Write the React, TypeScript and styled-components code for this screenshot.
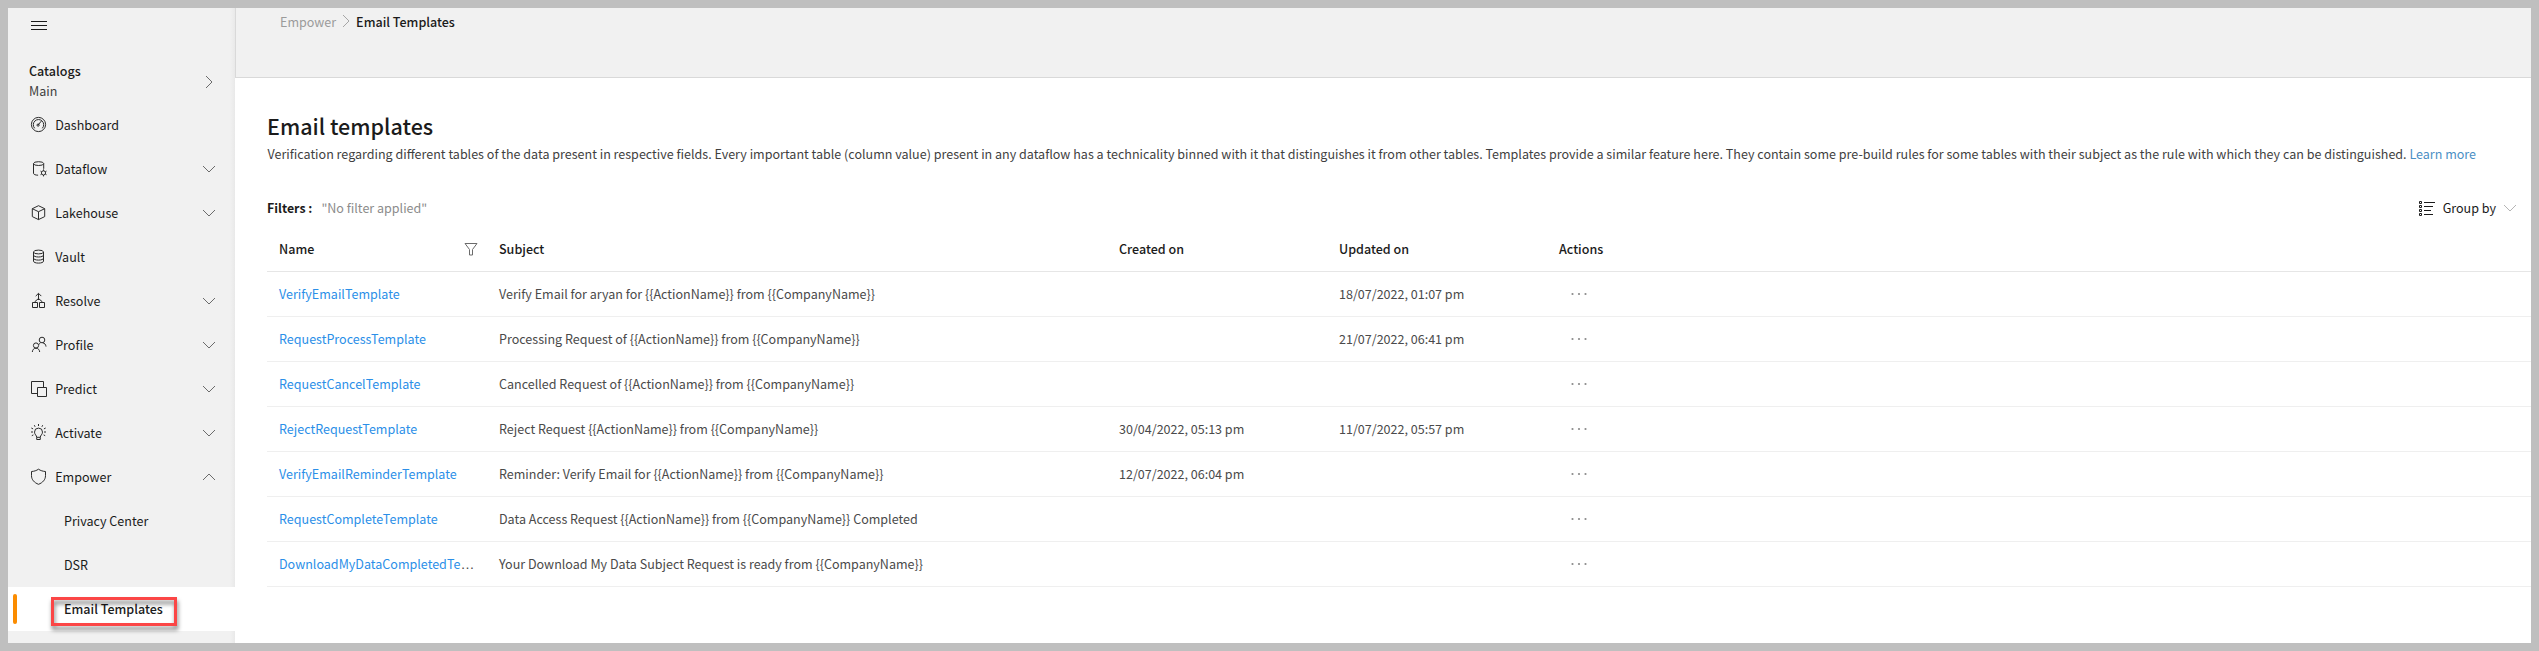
import React from 'react';
import styled, { createGlobalStyle, css } from 'styled-components';

const GlobalStyle = createGlobalStyle`
  * { box-sizing: border-box; }
  body {
    margin: 0;
    background: #bfbfbf;
    color: #1b1b1b;
    font-family: 'Noto Sans CJK SC', 'Noto Sans', sans-serif;
    font-size: 12.54px;
    line-height: 20px;
  }
`;

const Frame = styled.div`
  display: flex;
  height: 100vh;
  border: 8px solid #bfbfbf;
  background: #fff;
  overflow: hidden;
`;

const Sidebar = styled.nav`
  flex: none;
  display: flex;
  flex-direction: column;
  width: 227px;
  background: linear-gradient(to right, #f1f1f1 calc(100% - 5px), #e9e9e9);
`;

const MenuToggle = styled.div`
  height: 53px;
  padding: 9px 0 0 22px;
`;

const Catalog = styled.div`
  display: flex;
  align-items: center;
  justify-content: space-between;
  height: 42px;
  padding: 0 22px 2px 21px;
`;

const CatalogTitle = styled.div`
  font-weight: 500;
`;

const CatalogName = styled.div`
  color: #3f3f3f;
`;

const CatalogArrow = styled.span`
  display: flex;
  margin-top: 2px;
`;

const NavItem = styled.a`
  flex: none;
  display: flex;
  align-items: center;
  height: 44px;
  padding: 0 19px 0 22px;
`;

const NavLabel = styled.span`
  flex: 1;
  margin-left: 7.2px;
`;

const SubItem = styled.a<{ $active?: boolean }>`
  flex: none;
  display: flex;
  align-items: center;
  height: 44px;
  padding-left: 5px;
  ${(p) => p.$active && css`
    background: #fff;
    font-weight: 500;
  `}
`;

const ActiveBar = styled.span<{ $visible?: boolean }>`
  width: 4px;
  height: 30px;
  border-radius: 2px;
  background: ${(p) => (p.$visible ? '#fb8c00' : 'transparent')};
`;

const SubLabel = styled.span`
  position: relative;
  margin-left: 47px;
`;

const Highlight = styled.span`
  position: absolute;
  left: -13px;
  top: -2px;
  width: 126px;
  height: 29px;
  border: 3px solid #fb4646;
  filter: drop-shadow(1px 4px 2px rgba(0, 0, 0, 0.5));
`;

const Main = styled.main`
  flex: 1;
  min-width: 0;
  display: flex;
  flex-direction: column;
`;

const Header = styled.header`
  flex: none;
  display: flex;
  align-items: flex-start;
  height: 70px;
  padding: 4px 0 0 44px;
  border-left: 1px solid #d9d9d9;
  border-bottom: 1px solid #d9d9d9;
  background: #f1f1f1;
`;

const Crumb = styled.span<{ $current?: boolean }>`
  color: ${(p) => (p.$current ? '#1b1b1b' : '#9b9b9b')};
  font-weight: ${(p) => (p.$current ? 500 : 400)};
`;

const CrumbSeparator = styled.span`
  display: flex;
  margin: 2px 6px 0 6px;
`;

const Content = styled.section`
  padding: 32px 0 0 32px;
`;

const Title = styled.h1`
  margin: 0 0 2px;
  font-size: 21.5px;
  font-weight: 500;
  line-height: 32px;
`;

const Description = styled.p`
  margin: 0;
  padding-left: 0.5px;
  color: #3f3f3f;
  white-space: nowrap;
`;

const LearnMore = styled.a`
  color: #4b8fc4;
`;

const Toolbar = styled.div`
  display: flex;
  align-items: center;
  justify-content: space-between;
  height: 63px;
  padding: 25px 14px 0 0;
`;

const FilterLabel = styled.span`
  margin-right: 9px;
  font-size: 12.4px;
  font-weight: 700;
`;

const FilterValue = styled.span`
  color: #8c8c8c;
`;

const GroupBy = styled.div`
  display: flex;
  align-items: center;
  gap: 7px;
`;

const Row = styled.div<{ $head?: boolean }>`
  display: grid;
  grid-template-columns: 220px 620px 220px 220px 1fr;
  align-items: center;
  height: 45px;
  border-bottom: 1px solid ${(p) => (p.$head ? '#e6e6e6' : '#efefef')};
  color: ${(p) => (p.$head ? '#1b1b1b' : '#4a4a4a')};
  font-weight: ${(p) => (p.$head ? 500 : 400)};
`;

const Cell = styled.div`
  display: flex;
  align-items: center;
  justify-content: space-between;
  padding: 0 9px 0 12px;
  white-space: nowrap;
`;

const NameLink = styled.a`
  color: #2b8fe8;
`;

const Ellipsis = styled.span`
  color: #4a4a4a;
  font-family: 'Liberation Sans', sans-serif;
  font-size: 14px;
  line-height: 14px;
`;

const MoreIcon = styled.svg`
  margin-left: 11px;
`;

type Dir = 'right' | 'down' | 'up';

const chevrons: Record<Dir, { w: number; h: number; d: string }> = {
  right: { w: 8, h: 14, d: 'M1 1l6 6-6 6' },
  down: { w: 14, h: 8, d: 'M1 1l6 6 6-6' },
  up: { w: 14, h: 8, d: 'M1 7l6-6 6 6' },
};

function Chevron({ dir, color = '#6b6b6b' }: { dir: Dir; color?: string }) {
  const c = chevrons[dir];
  return (
    <svg width={c.w} height={c.h} fill="none" stroke={color}>
      <path d={c.d} />
    </svg>
  );
}

const icons: Record<string, React.ReactNode> = {
  Dashboard: (
    <>
      <circle cx="8.5" cy="8.5" r="7.1" />
      <path d="M4.7 12.3a5.2 5.2 0 1 1 7.6 0M8 9.1l3.3-4" />
      <circle cx="8.1" cy="9.1" r="1.1" />
    </>
  ),
  Dataflow: (
    <>
      <ellipse cx="8.6" cy="3.6" rx="5.1" ry="1.9" />
      <path d="M3.5 3.6v9.7c0 1.1 1.9 1.9 4.6 1.9M13.7 3.6v5.2" />
      <circle cx="13.5" cy="12.9" r="2.1" />
      <path d="M13.5 9.4v1.4M13.5 15v1.4M10.5 11.1l1.2.7M15.3 14l1.2.7M10.5 14.7l1.2-.7M15.3 11.8l1.2-.7" />
    </>
  ),
  Lakehouse: <path d="M8.5 1.7l6.2 3v7.9l-6.2 3-6.2-3V4.7zM2.3 4.7l6.2 3 6.2-3M8.5 7.7v7.9" />,
  Vault: (
    <>
      <ellipse cx="8.5" cy="4" rx="5" ry="1.9" />
      <path d="M3.5 4v9.2c0 1.1 2.2 1.9 5 1.9s5-.8 5-1.9V4M3.5 7.1c0 1.1 2.2 1.9 5 1.9s5-.8 5-1.9M3.5 10.2c0 1.1 2.2 1.9 5 1.9s5-.8 5-1.9" />
    </>
  ),
  Resolve: <path d="M2.5 10.5h5v5h-5zM9.5 10.5h5v5h-5zM5 10.5v-1l3.5-3 3.5 3v1M8.5 8V1.500M5.700 4.100l2.800-2.800 2.800 2.800" />,
  Profile: (
    <>
      <circle cx="6" cy="9.5" r="2.6" />
      <path d="M2.3 16c.2-2.4 1.7-3.800 3.700-3.800s3.500 1.400 3.700 3.800" />
      <circle cx="12" cy="4" r="2.8" />
      <path d="M10.3 7.1c-.8.4-1.3.9-1.6 1.600M12.700 6.900c2 .2 3.100 1.600 3.300 3.700" />
    </>
  ),
  Predict: <path d="M7.5 13.5h-6v-12h12v6M7.5 7.5h9v9h-9z" />,
  Activate: (
    <path d="M6.7 13.3c0-2-2.2-2.7-2.2-5.2a4 4 0 0 1 8 0c0 2.5-2.2 3.2-2.2 5.2zM6.7 13.3v2.2h3.6v-2.2M8.5 0v2M4.3 1.2l.8 1.6M12.7 1.2l-.8 1.6M1.3 4l1.8.9M15.7 4l-1.8.9M1 8h2M14 8h2M1.8 11.7l1.6-.8M15.2 11.700l-1.600-.8" />
  ),
  Empower: <path d="M8.5 1.2c2 1.400 4.500 2.200 7 2.300v4.200c0 4-2.800 7-7 8.600-4.200-1.600-7-4.600-7-8.600V3.500c2.500-.1 5-.9 7-2.300z" />,
};

const navigation: { label: string; chevron?: Dir }[] = [
  { label: 'Dashboard' },
  { label: 'Dataflow', chevron: 'down' },
  { label: 'Lakehouse', chevron: 'down' },
  { label: 'Vault' },
  { label: 'Resolve', chevron: 'down' },
  { label: 'Profile', chevron: 'down' },
  { label: 'Predict', chevron: 'down' },
  { label: 'Activate', chevron: 'down' },
  { label: 'Empower', chevron: 'up' },
];

const templates = [
  { name: 'VerifyEmailTemplate', subject: 'Verify Email for aryan for {{ActionName}} from {{CompanyName}}', created: '', updated: '18/07/2022, 01:07 pm' },
  { name: 'RequestProcessTemplate', subject: 'Processing Request of {{ActionName}} from {{CompanyName}}', created: '', updated: '21/07/2022, 06:41 pm' },
  { name: 'RequestCancelTemplate', subject: 'Cancelled Request of {{ActionName}} from {{CompanyName}}', created: '', updated: '' },
  { name: 'RejectRequestTemplate', subject: 'Reject Request {{ActionName}} from {{CompanyName}}', created: '30/04/2022, 05:13 pm', updated: '11/07/2022, 05:57 pm' },
  { name: 'VerifyEmailReminderTemplate', subject: 'Reminder: Verify Email for {{ActionName}} from {{CompanyName}}', created: '12/07/2022, 06:04 pm', updated: '' },
  { name: 'RequestCompleteTemplate', subject: 'Data Access Request {{ActionName}} from {{CompanyName}} Completed', created: '', updated: '' },
  { name: 'DownloadMyDataCompletedTe', truncated: true, subject: 'Your Download My Data Subject Request is ready from {{CompanyName}}', created: '', updated: '' },
];

export default function App() {
  return (
    <Frame>
      <GlobalStyle />
      <Sidebar>
        <MenuToggle>
          <svg width="18" height="18" fill="none" stroke="#1b1b1b">
            <path d="M1 4.5h16M1 8.5h16M1 12.5h16" />
          </svg>
        </MenuToggle>
        <Catalog>
          <div>
            <CatalogTitle>Catalogs</CatalogTitle>
            <CatalogName>Main</CatalogName>
          </div>
          <CatalogArrow>
            <Chevron dir="right" />
          </CatalogArrow>
        </Catalog>
        {navigation.map(({ label, chevron }) => (
          <NavItem key={label}>
            <svg width="18" height="18" fill="none" stroke="#2b2b2b">
              {icons[label]}
            </svg>
            <NavLabel>{label}</NavLabel>
            {chevron && <Chevron dir={chevron} />}
          </NavItem>
        ))}
        <SubItem>
          <ActiveBar />
          <SubLabel>Privacy Center</SubLabel>
        </SubItem>
        <SubItem>
          <ActiveBar />
          <SubLabel>DSR</SubLabel>
        </SubItem>
        <SubItem $active>
          <ActiveBar $visible />
          <SubLabel>
            Email Templates
            <Highlight />
          </SubLabel>
        </SubItem>
      </Sidebar>
      <Main>
        <Header>
          <Crumb>Empower</Crumb>
          <CrumbSeparator>
            <Chevron dir="right" color="#a6a6a6" />
          </CrumbSeparator>
          <Crumb $current>Email Templates</Crumb>
        </Header>
        <Content>
          <Title>Email templates</Title>
          <Description>
            Verification regarding different tables of the data present in respective fields. Every important table
            (column value) present in any dataflow has a technicality binned with it that distinguishes it from other
            tables. Templates provide a similar feature here. They contain some pre-build rules for some tables with
            their subject as the rule with which they can be distinguished. <LearnMore>Learn more</LearnMore>
          </Description>
          <Toolbar>
            <div>
              <FilterLabel>Filters :</FilterLabel>
              <FilterValue>"No filter applied"</FilterValue>
            </div>
            <GroupBy>
              <svg width="18" height="17" fill="none" stroke="#1b1b1b">
                <path d="M1.5 1.5h2v2h-2zM1.5 5.5h2v2h-2zM1.5 9.5h2v2h-2zM1.5 13.5h2v2h-2zM6 2.5h11M6 6.5h9M6 10.5h7M6 14.5h9" />
              </svg>
              Group by
              <Chevron dir="down" color="#b5b5b5" />
            </GroupBy>
          </Toolbar>
          <Row $head>
            <Cell>
              Name
              <svg width="14" height="14" fill="none" stroke="#6b6b6b">
                <path d="M1 1.5h12L8.5 7.5v5.5h-3V7.5z" />
              </svg>
            </Cell>
            <Cell>Subject</Cell>
            <Cell>Created on</Cell>
            <Cell>Updated on</Cell>
            <Cell>Actions</Cell>
          </Row>
          {templates.map((t) => (
            <Row key={t.name}>
              <Cell>
                <NameLink>
                  {t.name}
                  {t.truncated && <Ellipsis>…</Ellipsis>}
                </NameLink>
              </Cell>
              <Cell>{t.subject}</Cell>
              <Cell>{t.created}</Cell>
              <Cell>{t.updated}</Cell>
              <Cell>
                <MoreIcon width="18" height="4" fill="#8a8a8a">
                  <circle cx="2.5" cy="2" r="1.1" />
                  <circle cx="9" cy="2" r="1.1" />
                  <circle cx="15.5" cy="2" r="1.1" />
                </MoreIcon>
              </Cell>
            </Row>
          ))}
        </Content>
      </Main>
    </Frame>
  );
}
